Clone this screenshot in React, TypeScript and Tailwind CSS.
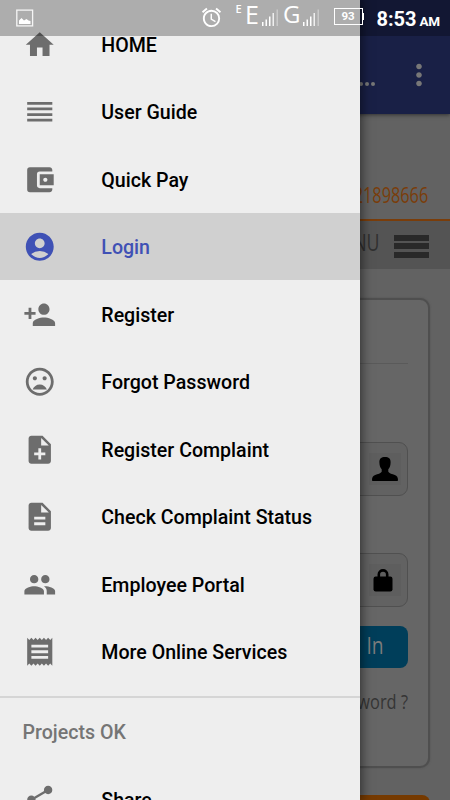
import type { ReactNode } from "react"
import type { IconType } from "react-icons"
import {
  MdAccountBalanceWallet,
  MdAccountCircle,
  MdAlarm,
  MdDescription,
  MdHome,
  MdMoodBad,
  MdMoreVert,
  MdNoteAdd,
  MdPeople,
  MdPersonAdd,
  MdReceipt,
  MdReorder,
  MdShare,
} from "react-icons/md"
import clsx from "clsx"

type MenuItem = { label: string; icon: IconType; active?: boolean }

const menu: MenuItem[] = [
  { label: "HOME", icon: MdHome },
  { label: "User Guide", icon: MdReorder },
  { label: "Quick Pay", icon: MdAccountBalanceWallet },
  { label: "Login", icon: MdAccountCircle, active: true },
  { label: "Register", icon: MdPersonAdd },
  { label: "Forgot Password", icon: MdMoodBad },
  { label: "Register Complaint", icon: MdNoteAdd },
  { label: "Check Complaint Status", icon: MdDescription },
  { label: "Employee Portal", icon: MdPeople },
  { label: "More Online Services", icon: MdReceipt },
]

function DrawerItem({ label, icon: Icon, active }: MenuItem) {
  return (
    <li
      className={clsx(
        "flex h-[67.5px] shrink-0 items-center pl-[22.5px]",
        active ? "bg-[#d0d0d0] text-[#3f51b5]" : "text-black"
      )}
    >
      <Icon
        className={clsx(
          "mt-px size-[33.5px] shrink-0",
          active ? "text-[#3f51b5]" : "text-[#6d6d6d]"
        )}
      />
      <span className="ml-[45.3px] pt-[3.5px] text-[19.6px] font-medium leading-6">
        {label}
      </span>
    </li>
  )
}

function Drawer() {
  return (
    <nav className="absolute inset-y-0 left-0 w-[360px] overflow-hidden bg-[#eeeeee] pt-[10px] shadow-[0_0_10px_2px_rgba(0,0,0,0.5)]">
      <ul className="flex flex-col">
        {menu.map((item) => (
          <DrawerItem key={item.label} {...item} />
        ))}
      </ul>
      <div className="mt-[11px] border-t-2 border-[#d5d5d5]" />
      <h2 className="flex h-[67px] items-center pl-[22.5px] pt-0.5 text-[19.6px] font-medium text-[#757575]">
        Projects OK
      </h2>
      <ul>
        <DrawerItem label="Share" icon={MdShare} />
      </ul>
    </nav>
  )
}

function Signal() {
  return (
    <svg viewBox="0 0 17 17" className="h-[17px] w-[17px]" fill="#fff">
      <path d="M0 13h1.5v4H0zM3.5 10.500h1.500v6.500H3.500zM7 7.500h1.500v9.500H7z" />
      <path d="M10.500 4H12v13h-1.500z" opacity=".8" />
      <path d="M14.500 0.500H16v16.500h-1.500z" opacity=".35" />
    </svg>
  )
}

function StatusBar() {
  return (
    <div className="absolute inset-x-0 top-0 flex h-[35.500px] bg-black/27 text-white">
      <svg
        viewBox="0 0 18 18"
        className="ml-4 mt-[9px] size-[18px] shrink-0"
        fill="none"
      >
        <rect x="0.8" y="1.100" width="15.800" height="15.800" stroke="#f5f5f5" strokeWidth="1.300" />
        <path d="M3 15v-3.500l2.500-2.500 2.500 2.500 2.500-1.500 2 1.500 2 .5v3z" fill="#fff" />
      </svg>
      <MdAlarm className="ml-[166px] mt-[6px] size-[23px] shrink-0" />
      <span className="ml-[12.500px] mt-[2px] w-[6px] shrink-0 font-['Open_Sans'] text-[11px] font-semibold leading-[14px]">
        E
      </span>
      <span className="ml-[3.500px] w-[14.500px] shrink-0 font-['Open_Sans'] text-[25px] leading-[28px]">
        E
      </span>
      <div className="ml-[2.500px] mt-[9px] shrink-0">
        <Signal />
      </div>
      <span className="ml-[4px] w-[18px] shrink-0 font-['Open_Sans'] text-[24px] font-medium leading-[28px]">
        G
      </span>
      <div className="ml-[2px] mt-[9px] shrink-0">
        <Signal />
      </div>
      <div className="ml-[13.500px] mt-[8px] flex h-[17px] w-[29px] shrink-0 items-center justify-center border-[1.500px] border-white text-[11.500px] font-bold">
        93
      </div>
      <div className="mt-[13px] h-[7px] w-[1.500px] shrink-0 bg-white" />
      <div className="ml-[12.500px] mt-[7px] flex items-baseline whitespace-nowrap leading-6">
        <span className="text-[20px] font-bold">8:53</span>
        <span className="ml-[3px] text-[13.500px] font-bold tracking-tight">AM</span>
      </div>
    </div>
  )
}

function Field({ children }: { children: ReactNode }) {
  return (
    <div className="flex h-[54px] items-center justify-end rounded-[9px] border border-[#505050] bg-[#626262] pr-[6px]">
      <div className="flex size-[32px] items-center justify-center bg-[#5e5e5e]">
        {children}
      </div>
    </div>
  )
}

function Page() {
  return (
    <div className="flex h-full flex-col bg-[#626262] font-['Open_Sans',sans-serif]">
      <header className="z-10 flex h-[114px] shrink-0 items-end justify-end bg-[#192046] pb-[22px] shadow-[0_1px_4px_rgba(0,0,0,0.5)]">
        <div className="mb-[6px] flex gap-[2px]">
          <i className="size-[4px] rounded-full bg-[#777]" />
          <i className="size-[4px] rounded-full bg-[#777]" />
          <i className="size-[4px] rounded-full bg-[#777]" />
        </div>
        <MdMoreVert className="ml-[27px] mr-[14px] size-[34px] text-[#777]" />
      </header>

      <div className="flex h-[107px] shrink-0 items-end justify-end border-b-2 border-[#7a3d0a] pb-[8px] pr-[21.500px]">
        <span className="origin-right scale-x-[0.74] text-[22px] font-medium text-[#7a3d0a]">
          021898666
        </span>
      </div>

      <div className="flex h-[48px] shrink-0 items-center justify-end bg-[#545454] pr-[21px]">
        <span className="mr-[14.500px] origin-right scale-x-[0.74] pb-[6px] text-[24px] text-[#303030]">
          MENU
        </span>
        <div className="flex flex-col gap-[2.500px] pt-[2px]">
          <div className="h-[6px] w-[35px] bg-[#292929]" />
          <div className="h-[6px] w-[35px] bg-[#292929]" />
          <div className="h-[6px] w-[35px] bg-[#292929]" />
        </div>
      </div>

      <main className="mx-[20px] mt-[29px] h-[470px] shrink-0 rounded-[10px] border-2 border-[#4f4f4f] bg-[#666666] px-[20.500px] shadow-[0_0_2px_#505050]">
        <div className="h-[64px] border-b border-[#5a5a5a]" />
        <div className="h-[78px]" />
        <Field>
          <svg viewBox="0 0 26 26" className="size-[26px]" fill="#000">
            <path d="M13 1c3.700 0 5.800 1.700 5.600 5.500-.1 3.200-.8 5.200-2.300 6.800v2.400c.8 1.600 4 2.400 6.500 3.200 2.200.8 3.200 2.300 3.200 5.100 0 .8-.4 1-1.200 1H1.200C.4 25 0 24.800 0 24c0-2.800 1-4.300 3.200-5.100 2.500-.8 5.700-1.600 6.500-3.200v-2.400C8.200 11.700 7.500 9.700 7.400 6.500 7.200 2.700 9.300 1 13 1z" />
          </svg>
        </Field>
        <div className="h-[57px]" />
        <Field>
          <svg viewBox="0 0 20 24" className="mr-[3px] h-[24px] w-[20px]">
            <path d="M5.800 10V6.500c0-5.500 8.400-5.500 8.400 0V10" fill="none" stroke="#000" strokeWidth="2.600" />
            <rect x="0.500" y="8.500" width="19" height="15" rx="2.200" fill="#000" />
          </svg>
        </Field>
        <div className="mt-[18.500px] flex h-[42px] items-center justify-end rounded-[8px] bg-[#003e5a] pb-[3px] pr-[24px] text-[24px] font-medium text-[#7c7c7c]">
          <span className="origin-right scale-x-[0.8] [word-spacing:6px]">Sign In</span>
        </div>
        <div className="mt-[17px] flex justify-end text-[20.500px] leading-8 text-[#353535]">
          <span className="origin-right scale-x-[0.8]">Forgot Password ?</span>
        </div>
      </main>
      <div className="mx-[20px] mt-[26.500px] h-[20px] shrink-0 rounded-t-[8px] bg-[#763a00]" />
    </div>
  )
}

export default function App() {
  return (
    <div className="relative h-[800px] w-[450px] overflow-hidden font-['Roboto',sans-serif]">
      <Page />
      <div className="absolute inset-0 z-20">
        <Drawer />
        <StatusBar />
      </div>
    </div>
  )
}
